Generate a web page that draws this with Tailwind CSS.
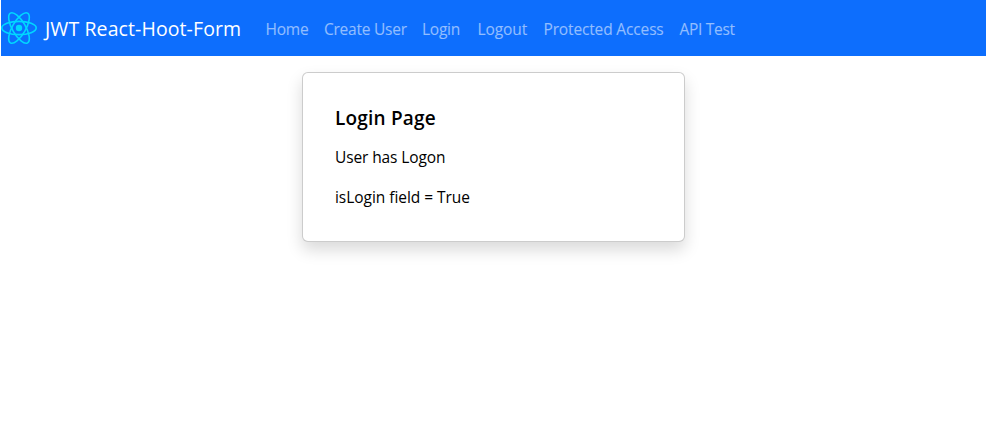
<!DOCTYPE html>
<html lang="en">
<head>
<meta charset="utf-8">
<title>JWT React-Hoot-Form</title>
<script src="https://cdn.jsdelivr.net/npm/@tailwindcss/browser@4"></script>
</head>
<body class="min-h-screen bg-white pl-px font-['Segoe_UI','Open_Sans',sans-serif] text-[15.5px] leading-6 tracking-[-0.24px] text-black">
<nav class="flex h-14 items-center bg-[#0d6efd] whitespace-nowrap">
  <a class="flex w-[264.5px] items-center text-white">
    <svg class="mr-2 h-9 w-9" viewBox="0 0 36 36" fill="none" stroke="#00d8ff" stroke-width="1.6">
      <ellipse cx="18" cy="18" rx="17.2" ry="6.6"/>
      <ellipse cx="18" cy="18" rx="17.2" ry="6.6" transform="rotate(60 18 18)"/>
      <ellipse cx="18" cy="18" rx="17.2" ry="6.6" transform="rotate(120 18 18)"/>
      <circle cx="18" cy="18" r="3.2" fill="#00d8ff" stroke="none"/>
    </svg>
    <span class="pt-0.5 text-[19.5px] leading-[30px] tracking-[0.1px]">JWT React-Hoot-Form</span>
  </a>
  <div class="flex gap-4 pt-0.5 text-white/55">
    <a class="w-[42.5px]">Home</a>
    <a class="w-[82px]">Create User</a>
    <a class="w-[39.5px]">Login</a>
    <a class="w-[50px] tracking-[-0.1px]">Logout</a>
    <a class="w-[120px] tracking-[-0.15px]">Protected Access</a>
    <a class="w-[56px] tracking-[-0.3px]">API Test</a>
  </div>
</nav>
<main class="mt-4 ml-[301px] h-[170px] w-[383px] rounded-md border border-black/20 bg-white p-8 shadow-[0_8px_16px_rgba(0,0,0,0.15)]">
  <h1 class="mb-3 pt-px text-[19px] leading-6 font-semibold tracking-[0.2px]">Login Page</h1>
  <p class="mb-4 pt-[3px] tracking-[-0.12px]">User has Logon</p>
  <p class="tracking-[-0.04px]">isLogin field = True</p>
</main>
</body>
</html>
